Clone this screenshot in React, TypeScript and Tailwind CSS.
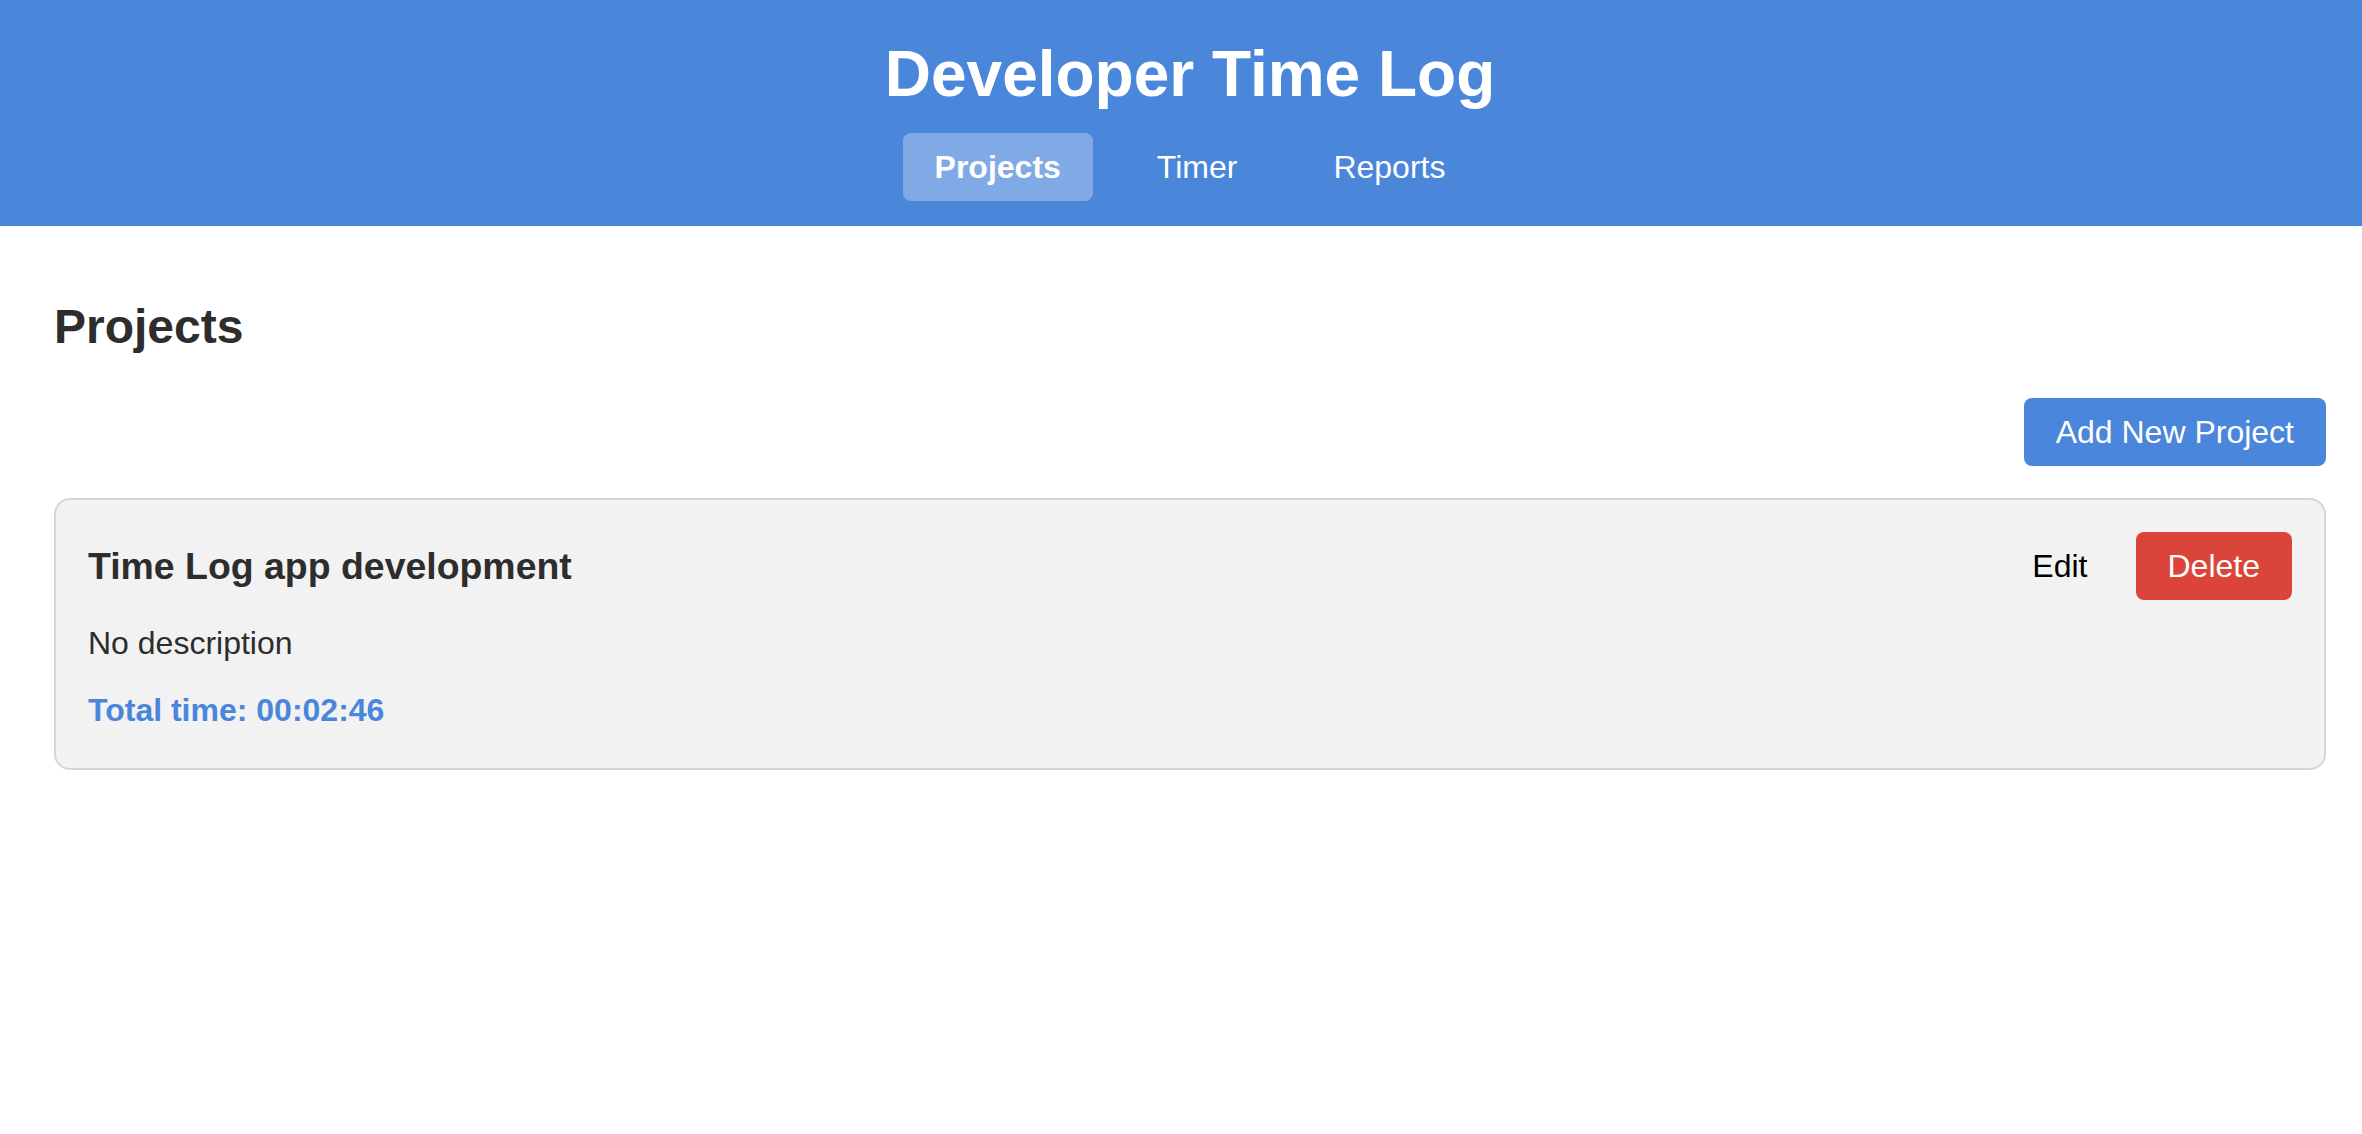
const NavLink = ({ label, active }: { label: string; active?: boolean }) => (
  <button
    className={
      active
        ? 'h-[68px] px-[32px] rounded-[8px] bg-white/30 text-white text-[32px] font-bold'
        : 'h-[68px] px-[32px] rounded-[8px] text-white text-[32px]'
    }
  >
    {label}
  </button>
);

const ProjectCard = () => (
  <div className="rounded-[16px] border-2 border-[#d6d6d6] bg-[#f2f2f2] px-[32px] pt-[32px] pb-[39px]">
    <div className="flex items-center justify-between">
      <h3 className="text-[37.44px] font-bold text-[#2d2d2d] leading-[normal]">
        Time Log app development
      </h3>
      <div className="flex items-center gap-[16px]">
        <button className="h-[68px] px-[32px] text-[32px] text-black">Edit</button>
        <button className="h-[68px] px-[32px] rounded-[8px] bg-[#db443a] text-[32px] text-white">
          Delete
        </button>
      </div>
    </div>
    <p className="mt-[25px] text-[32px] text-[#2d2d2d] leading-[normal]">No description</p>
    <p className="mt-[30px] text-[32px] font-bold text-[#4a86db] leading-[normal]">
      Total time: 00:02:46
    </p>
  </div>
);

export default function App() {
  return (
    <div className="min-h-[1134px] bg-white font-['Liberation_Sans',Arial,sans-serif]">
      {/* Header */}
      <header className="h-[226px] bg-[#4a86da] pl-[18px] pt-[37px] flex flex-col items-center">
        <h1 className="text-[64px] font-bold text-white leading-[normal]">Developer Time Log</h1>
        <nav className="mt-[22px] flex gap-[32px]">
          <NavLink label="Projects" active />
          <NavLink label="Timer" />
          <NavLink label="Reports" />
        </nav>
      </header>

      {/* Main */}
      <main className="pl-[54px] pr-[36px]">
        <h2 className="pt-[73px] text-[48px] font-bold text-[#2d2d2d] leading-[normal]">Projects</h2>
        <div className="mt-[44px] flex justify-end">
          <button className="h-[68px] px-[32px] rounded-[8px] bg-[#4a86db] text-[32px] text-white">
            Add New Project
          </button>
        </div>
        <div className="mt-[32px]">
          <ProjectCard />
        </div>
      </main>
    </div>
  );
}
